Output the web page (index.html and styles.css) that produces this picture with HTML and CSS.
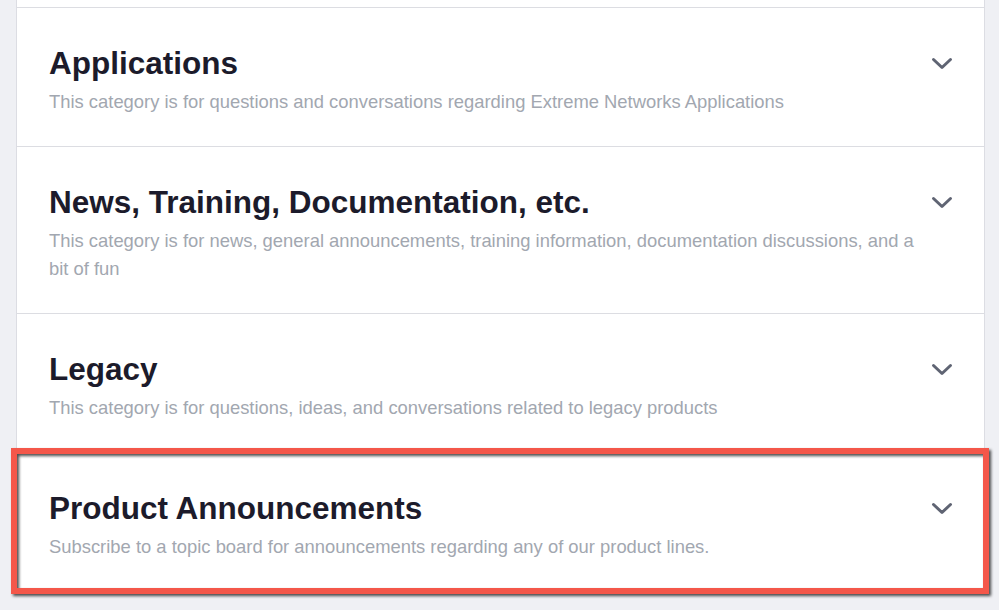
FILE: index.html
```html
<!DOCTYPE html>
<html lang="en">
<head>
<meta charset="utf-8">
<title>Categories</title>
<link rel="stylesheet" href="styles.css">
</head>
<body>
<div class="panel">
  <div class="tail"></div>
  <section class="cat">
    <div class="cat-head">
      <h2 class="cat-title">Applications</h2>
      <svg class="chev" viewBox="0 0 22 13" width="22" height="13"><polyline points="2.5,2.5 11,10.5 19.5,2.5"/></svg>
    </div>
    <p class="cat-desc">This category is for questions and conversations regarding Extreme Networks Applications</p>
  </section>
  <section class="cat">
    <div class="cat-head">
      <h2 class="cat-title">News, Training, Documentation, etc.</h2>
      <svg class="chev" viewBox="0 0 22 13" width="22" height="13"><polyline points="2.5,2.5 11,10.5 19.5,2.5"/></svg>
    </div>
    <p class="cat-desc">This category is for news, general announcements, training information, documentation discussions, and a bit of fun</p>
  </section>
  <section class="cat">
    <div class="cat-head">
      <h2 class="cat-title">Legacy</h2>
      <svg class="chev" viewBox="0 0 22 13" width="22" height="13"><polyline points="2.5,2.5 11,10.5 19.5,2.5"/></svg>
    </div>
    <p class="cat-desc">This category is for questions, ideas, and conversations related to legacy products</p>
  </section>
  <section class="cat cat-highlight">
    <div class="cat-head">
      <h2 class="cat-title">Product Announcements</h2>
      <svg class="chev" viewBox="0 0 22 13" width="22" height="13"><polyline points="2.5,2.5 11,10.5 19.5,2.5"/></svg>
    </div>
    <p class="cat-desc">Subscribe to a topic board for announcements regarding any of our product lines.</p>
    <div class="annot"></div>
  </section>
</div>
</body>
</html>
```

FILE: styles.css
```css
html, body {
  margin: 0;
  padding: 0;
  background: #eff0f4;
}
body {
  font-family: "Liberation Sans", Arial, sans-serif;
  height: 610px;
  overflow: hidden;
}
.panel {
  margin-left: 16px;
  width: 969px;
  box-sizing: border-box;
  background: #ffffff;
  border-left: 1px solid #dcdde3;
  border-right: 1px solid #dcdde3;
}
.tail {
  height: 7px;
}
.cat {
  border-top: 1px solid #dcdde2;
  padding: 36px 32px 30px 32px;
}
.cat-head {
  display: flex;
  align-items: center;
  justify-content: space-between;
  height: 38px;
}
.cat-title {
  margin: 0;
  font-size: 31.5px;
  line-height: 38px;
  font-weight: 700;
  color: #1c1b2b;
}
.chev {
  display: block;
  margin-right: -1px;
}
.chev polyline {
  fill: none;
  stroke: #5f6473;
  stroke-width: 3;
  stroke-linecap: round;
  stroke-linejoin: round;
}
.cat-desc {
  margin: 6px 0 0 0;
  font-size: 18.4px;
  line-height: 28px;
  color: #a2a7b0;
  padding-right: 20px;
}
.cat-highlight {
  position: relative;
}
.annot {
  position: absolute;
  left: -6px;
  right: -5px;
  top: -5px;
  bottom: -3px;
  border: 6px solid #f4574a;
  filter: drop-shadow(2px 2px 1.5px rgba(0, 0, 0, 0.7));
  pointer-events: none;
}
```
